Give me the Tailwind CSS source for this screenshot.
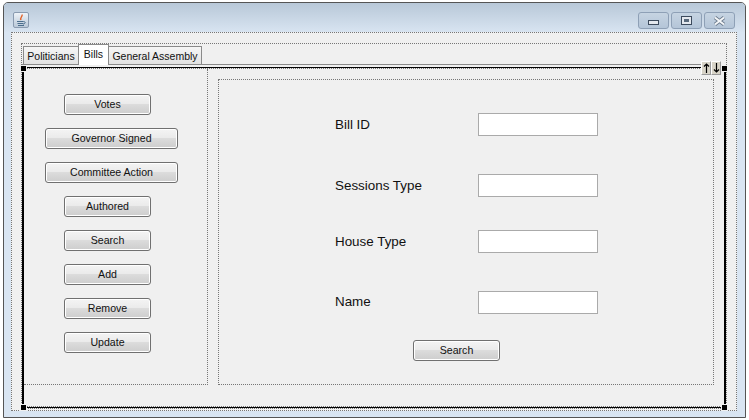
<!DOCTYPE html>
<html lang="en">
<head>
  <meta charset="UTF-8" />
  <title>Bills</title>
  <script src="https://cdn.jsdelivr.net/npm/@tailwindcss/browser@4"></script>
</head>
<body class="w-[749px] h-[420px] overflow-hidden bg-white font-['Liberation_Sans',sans-serif] text-[#111]">
  <!-- window frame -->
  <div class="ml-[3px] mt-[2px] w-[743px] h-[416px] border border-[#555] rounded-t-[5px] flex flex-col bg-[#d9e5f2] overflow-hidden">
    <!-- title bar -->
    <div class="h-[29px] shrink-0 flex items-start justify-between bg-gradient-to-b from-[#b8c8d8] to-[#d8e4f1] pl-[9px] pr-[10px] pt-[9px]">
      <div class="w-[16px] h-[16px] border border-[#8a9bb0] rounded-[2px] bg-gradient-to-b from-[#eef3f8] to-[#b9c8d8] flex items-center justify-center">
        <svg width="12" height="13" viewBox="0 0 12 13" fill="none">
          <path d="M7 0.5C8 2.5 4.5 3.5 6 6" stroke="#e2632a" stroke-width="1.4"/>
          <path d="M2 7.5H8.5M2.5 9.5H8M3 11.5H9" stroke="#4a6d8c" stroke-width="1.1"/>
          <path d="M8.5 7.5C11 7.5 10.5 10 8 10" stroke="#4a6d8c"/>
        </svg>
      </div>
      <div class="flex gap-[2px]">
        <div class="w-[31px] h-[17px] border border-[#8ea0b6] rounded-[3px] bg-gradient-to-b from-[#c6d4e2] to-[#b4c5d8] flex items-center justify-center">
          <div class="w-[11px] h-[5px] mt-[3px] border border-[#3c4a5c] bg-[#e4e8ee]"></div>
        </div>
        <div class="w-[31px] h-[17px] border border-[#8ea0b6] rounded-[3px] bg-gradient-to-b from-[#c6d4e2] to-[#b4c5d8] flex items-center justify-center">
          <div class="w-[11px] h-[9px] border border-[#3c4a5c] bg-[#e4e8ee] flex items-center justify-center">
            <div class="w-[5px] h-[3px] bg-[#5a6a7c]"></div>
          </div>
        </div>
        <div class="w-[31px] h-[17px] border border-[#8ea0b6] rounded-[3px] bg-gradient-to-b from-[#c6d4e2] to-[#b4c5d8] flex items-center justify-center">
          <svg width="13" height="10" viewBox="0 0 13 10">
            <path d="M2 1.5L11 8.5M11 1.5L2 8.5" stroke="#6b7a8c" stroke-width="3.6"/>
            <path d="M2 1.5L11 8.5M11 1.5L2 8.5" stroke="#f4f6f8" stroke-width="2"/>
          </svg>
        </div>
      </div>
    </div>

    <!-- content -->
    <div class="ml-[7px] w-[726px] h-[379px] bg-[#f0f0f0] border border-dotted border-[#777] pl-[9px] pt-[10px]">
      <div class="w-[706px] h-[366px] border border-dotted border-[#777]">
        <!-- tabs -->
        <div class="h-[21px] mr-[6px] mb-[2px] flex items-end border-b border-[#8a8a8a] pl-[1px] text-[10.5px] leading-[18px] whitespace-nowrap">
          <div class="w-[56px] h-[18px] border border-b-0 border-[#8a8a8a] bg-gradient-to-b from-[#f6f6f6] to-[#e2e2e2] text-center">Politicians</div>
          <div class="relative z-10 w-[31px] h-[21px] -mb-px -ml-px border border-b-0 border-[#8a8a8a] bg-white text-center">Bills</div>
          <div class="w-[94px] h-[18px] -ml-px border border-b-0 border-[#8a8a8a] bg-gradient-to-b from-[#f6f6f6] to-[#e2e2e2] text-center">General Assembly</div>
        </div>

        <!-- tab pane with selection handles -->
        <div class="relative w-[704px] h-[341px] border-x-2 border-y border-black">
          <div class="h-[339px] border-y border-dotted border-[#777] flex">
            <!-- button column -->
            <div class="w-[184px] h-[316px] shrink-0 border-r border-b border-dotted border-[#777] flex flex-col items-start gap-[13px] pt-[25px] text-[10.6px]">
              <button class="ml-[40px] w-[87px] h-[21px] border border-[#707070] rounded-[3px] shadow-[inset_0_0_0_1px_#fff] bg-[linear-gradient(#f4f4f4_0%,#ebebeb_45%,#dcdcdc_50%,#cdcdcd_100%)]">Votes</button>
              <button class="ml-[21px] w-[133px] h-[21px] border border-[#707070] rounded-[3px] shadow-[inset_0_0_0_1px_#fff] bg-[linear-gradient(#f4f4f4_0%,#ebebeb_45%,#dcdcdc_50%,#cdcdcd_100%)]">Governor Signed</button>
              <button class="ml-[21px] w-[133px] h-[21px] border border-[#707070] rounded-[3px] shadow-[inset_0_0_0_1px_#fff] bg-[linear-gradient(#f4f4f4_0%,#ebebeb_45%,#dcdcdc_50%,#cdcdcd_100%)]">Committee Action</button>
              <button class="ml-[40px] w-[87px] h-[21px] border border-[#707070] rounded-[3px] shadow-[inset_0_0_0_1px_#fff] bg-[linear-gradient(#f4f4f4_0%,#ebebeb_45%,#dcdcdc_50%,#cdcdcd_100%)]">Authored</button>
              <button class="ml-[40px] w-[87px] h-[21px] border border-[#707070] rounded-[3px] shadow-[inset_0_0_0_1px_#fff] bg-[linear-gradient(#f4f4f4_0%,#ebebeb_45%,#dcdcdc_50%,#cdcdcd_100%)]">Search</button>
              <button class="ml-[40px] w-[87px] h-[21px] border border-[#707070] rounded-[3px] shadow-[inset_0_0_0_1px_#fff] bg-[linear-gradient(#f4f4f4_0%,#ebebeb_45%,#dcdcdc_50%,#cdcdcd_100%)]">Add</button>
              <button class="ml-[40px] w-[87px] h-[21px] border border-[#707070] rounded-[3px] shadow-[inset_0_0_0_1px_#fff] bg-[linear-gradient(#f4f4f4_0%,#ebebeb_45%,#dcdcdc_50%,#cdcdcd_100%)]">Remove</button>
              <button class="ml-[40px] w-[87px] h-[21px] border border-[#707070] rounded-[3px] shadow-[inset_0_0_0_1px_#fff] bg-[linear-gradient(#f4f4f4_0%,#ebebeb_45%,#dcdcdc_50%,#cdcdcd_100%)]">Update</button>
            </div>
            <!-- search form -->
            <div class="ml-[10px] mt-[10px] w-[496px] h-[306px] shrink-0 border border-dotted border-[#777] pl-[116px] text-[13.4px]">
              <div class="flex items-center h-[23px] mt-[33px]">
                <span class="w-[143px] mt-[2px]">Bill ID</span>
                <div class="w-[120px] h-[23px] border border-[#aaa] bg-white"></div>
              </div>
              <div class="flex items-center h-[23px] mt-[38px]">
                <span class="w-[143px] mt-[2px]">Sessions Type</span>
                <div class="w-[120px] h-[23px] border border-[#aaa] bg-white"></div>
              </div>
              <div class="flex items-center h-[23px] mt-[33px]">
                <span class="w-[143px] mt-[2px]">House Type</span>
                <div class="w-[120px] h-[23px] border border-[#aaa] bg-white"></div>
              </div>
              <div class="flex items-center h-[23px] mt-[38px]">
                <span class="w-[143px] mb-[1px]">Name</span>
                <div class="w-[120px] h-[23px] border border-[#aaa] bg-white"></div>
              </div>
              <button class="block ml-[78px] mt-[26px] w-[87px] h-[21px] border border-[#707070] rounded-[3px] shadow-[inset_0_0_0_1px_#fff] bg-[linear-gradient(#f4f4f4_0%,#ebebeb_45%,#dcdcdc_50%,#cdcdcd_100%)] text-[10.6px]">Search</button>
            </div>
          </div>
          <!-- scroll arrows -->
          <div class="absolute right-[3px] top-[-7px] flex">
            <div class="w-[10px] h-[14px] border border-[#999] border-t-white border-l-white bg-[#d8d4c8] flex items-center justify-center">
              <svg width="7" height="10" viewBox="0 0 7 10" fill="none"><path d="M3.5 1V10M1 3.5L3.5 1L6 3.5" stroke="#000" stroke-width="1.2"/></svg>
            </div>
            <div class="w-[10px] h-[14px] border border-[#999] border-t-white border-l-white bg-[#d8d4c8] flex items-center justify-center">
              <svg width="7" height="10" viewBox="0 0 7 10" fill="none"><path d="M3.5 0V9M1 6.5L3.5 9L6 6.5" stroke="#000" stroke-width="1.2"/></svg>
            </div>
          </div>
          <!-- handles -->
          <div class="absolute left-[-3px] top-[-2px] w-[5px] h-[5px] bg-black ring-1 ring-[#f0f0f0]"></div>
          <div class="absolute right-[-3px] top-[-2px] w-[5px] h-[5px] bg-black ring-1 ring-[#f0f0f0]"></div>
          <div class="absolute left-[-3px] bottom-[-3px] w-[5px] h-[5px] bg-black ring-1 ring-[#f0f0f0]"></div>
          <div class="absolute right-[-3px] bottom-[-3px] w-[5px] h-[5px] bg-black ring-1 ring-[#f0f0f0]"></div>
        </div>
      </div>
    </div>
  </div>
</body>
</html>
